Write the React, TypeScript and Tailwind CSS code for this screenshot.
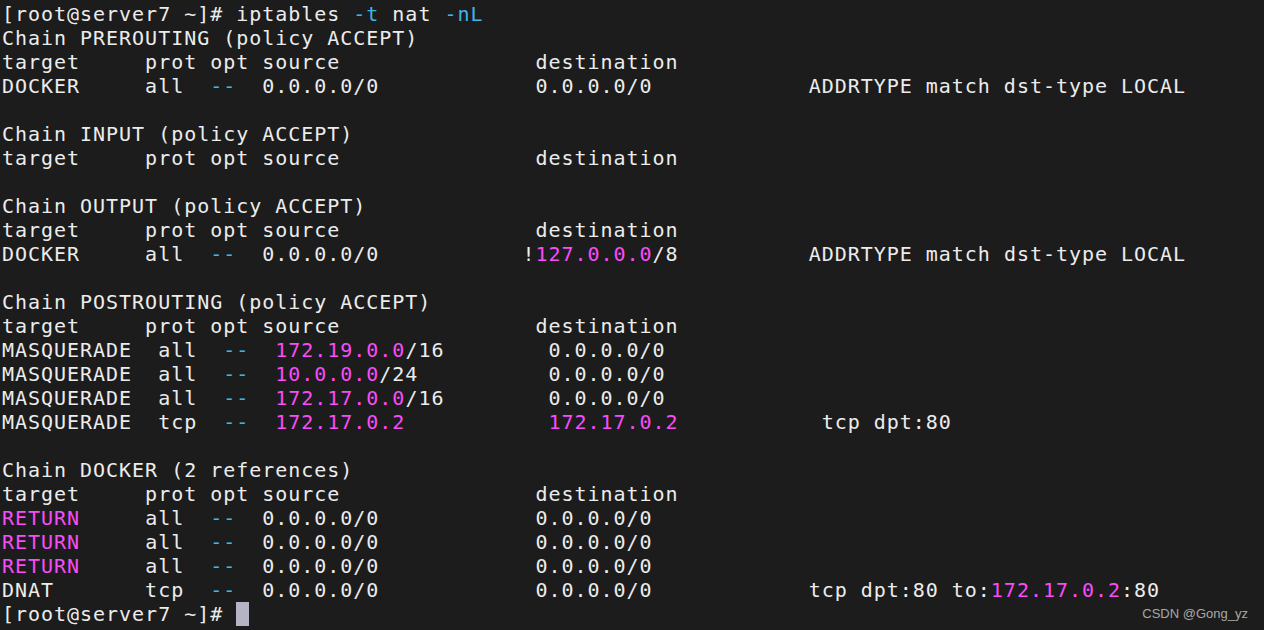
import React from 'react';

type Seg = [string, 'w' | 'c' | 'm'];

const header: Seg[] = [['target     prot opt source               destination', 'w']];
const dash: Seg = ['--', 'c'];

const lines: Seg[][] = [
  [['[root@server7 ~]# iptables ', 'w'], ['-t', 'c'], [' nat ', 'w'], ['-nL', 'c']],
  [['Chain PREROUTING (policy ACCEPT)', 'w']],
  header,
  [['DOCKER     all  ', 'w'], dash, ['  0.0.0.0/0            0.0.0.0/0            ADDRTYPE match dst-type LOCAL', 'w']],
  [],
  [['Chain INPUT (policy ACCEPT)', 'w']],
  header,
  [],
  [['Chain OUTPUT (policy ACCEPT)', 'w']],
  header,
  [['DOCKER     all  ', 'w'], dash, ['  0.0.0.0/0           !', 'w'], ['127.0.0.0', 'm'], ['/8          ADDRTYPE match dst-type LOCAL', 'w']],
  [],
  [['Chain POSTROUTING (policy ACCEPT)', 'w']],
  header,
  [['MASQUERADE  all  ', 'w'], dash, ['  ', 'w'], ['172.19.0.0', 'm'], ['/16        0.0.0.0/0', 'w']],
  [['MASQUERADE  all  ', 'w'], dash, ['  ', 'w'], ['10.0.0.0', 'm'], ['/24          0.0.0.0/0', 'w']],
  [['MASQUERADE  all  ', 'w'], dash, ['  ', 'w'], ['172.17.0.0', 'm'], ['/16        0.0.0.0/0', 'w']],
  [['MASQUERADE  tcp  ', 'w'], dash, ['  ', 'w'], ['172.17.0.2', 'm'], ['           ', 'w'], ['172.17.0.2', 'm'], ['           tcp dpt:80', 'w']],
  [],
  [['Chain DOCKER (2 references)', 'w']],
  header,
  [['RETURN', 'm'], ['     all  ', 'w'], dash, ['  0.0.0.0/0            0.0.0.0/0', 'w']],
  [['RETURN', 'm'], ['     all  ', 'w'], dash, ['  0.0.0.0/0            0.0.0.0/0', 'w']],
  [['RETURN', 'm'], ['     all  ', 'w'], dash, ['  0.0.0.0/0            0.0.0.0/0', 'w']],
  [['DNAT       tcp  ', 'w'], dash, ['  0.0.0.0/0            0.0.0.0/0            tcp dpt:80 to:', 'w'], ['172.17.0.2', 'm'], [':80', 'w']],
];

const colorClass = {
  w: 'text-[#ececec]',
  c: 'text-[#3fb4e8]',
  m: 'text-[#f84cf8]',
};

export default function App() {
  return (
    <div className="relative w-full h-[630px] overflow-hidden bg-[#1c1c1c] pt-[2px] pl-[2px] font-['DejaVu_Sans_Mono',monospace] text-[20px] leading-[24px] tracking-[0.97px] whitespace-pre">
      {lines.map((segs, i) => (
        <div key={i} className="h-[24px]">
          {segs.map(([text, c], j) => (
            <span key={j} className={colorClass[c]}>{text}</span>
          ))}
        </div>
      ))}
      <div className="h-[24px] flex items-center">
        <span className="text-[#ececec]">[root@server7 ~]# </span>
        <span className="inline-block w-[13px] h-[24px] bg-[#b4b4c4]" />
      </div>
      {/* watermark */}
      <div className="absolute right-[16px] bottom-[8px] font-['Liberation_Sans',sans-serif] text-[13px] leading-[16px] tracking-normal text-[#a8a8a8]">
        CSDN @Gong_yz
      </div>
    </div>
  );
}
